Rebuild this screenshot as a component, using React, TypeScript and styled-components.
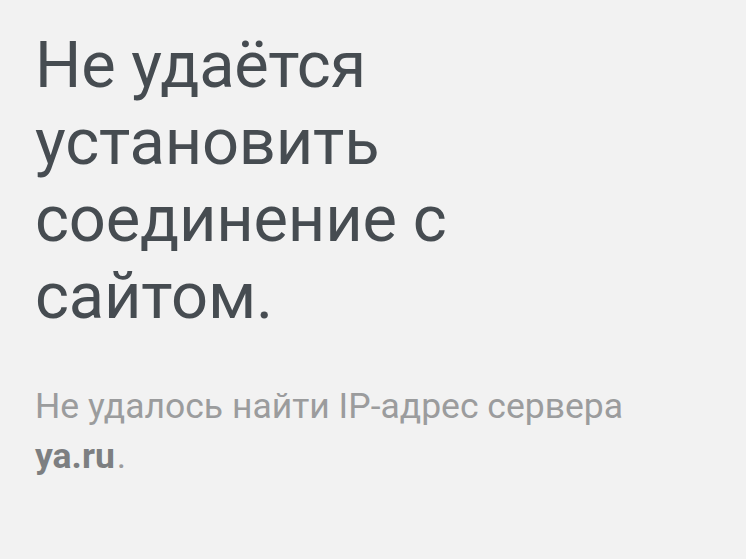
import React from "react";
import styled, { createGlobalStyle } from "styled-components";

const Global = createGlobalStyle`
  html, body { margin: 0; padding: 0; background: #f2f2f2; }
  body { font-family: Roboto, "Noto Sans", sans-serif; }
`;

const Page = styled.main`
  box-sizing: border-box;
  width: 746px;
  height: 559px;
  padding: 27px 0 0 35px;
  background: #f2f2f2;
  overflow: hidden;
`;

const Title = styled.h1`
  margin: 0;
  font-family: Roboto, sans-serif;
  font-weight: 400;
  font-size: 65px;
  line-height: 77px;
  color: #464c51;
  letter-spacing: -0.2px;
`;

const Message = styled.p`
  margin: 46px 0 0;
  font-family: Roboto, sans-serif;
  font-size: 35.5px;
  line-height: 50px;
  color: #9b9c9d;
`;

const Host = styled.b`
  font-weight: 700;
  color: #7d7f81;
  margin-right: 2px;
`;

export default function App() {
  return (
    <>
      <Global />
      <Page>
        <Title>
          Не удаётся
          <br />
          установить
          <br />
          соединение с
          <br />
          сайтом.
        </Title>
        <Message>
          Не удалось найти IP-адрес сервера
          <br />
          <Host>ya.ru</Host>.
        </Message>
      </Page>
    </>
  );
}
